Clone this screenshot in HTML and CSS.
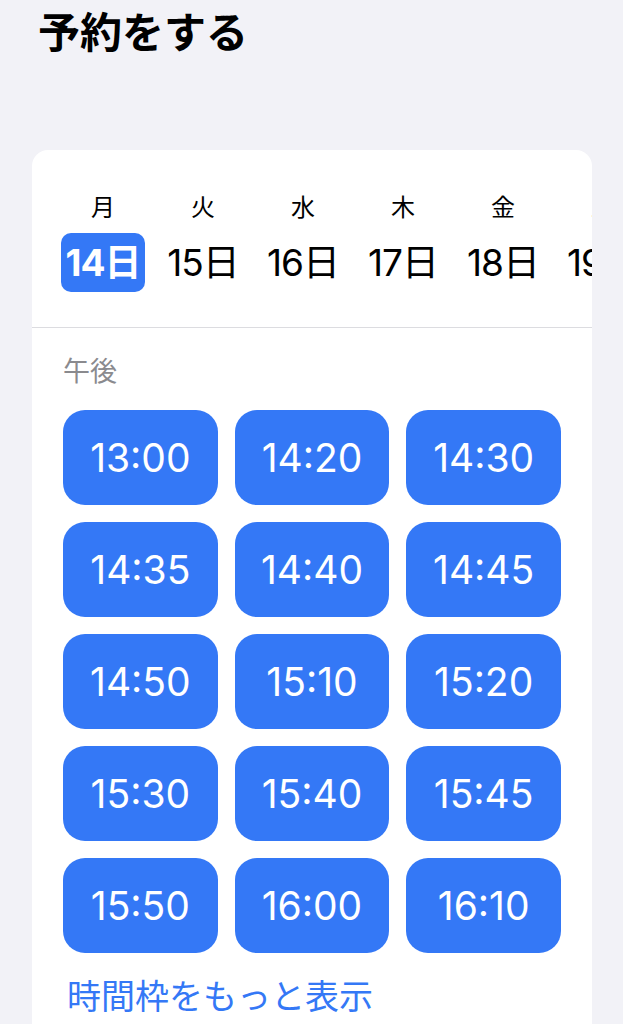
FILE: index.html
```html
<!DOCTYPE html>
<html lang="ja">
<head>
  <meta charset="UTF-8" />
  <meta name="viewport" content="width=device-width, initial-scale=1.0"/>
  <title>予約をする</title>
  <link rel="stylesheet" href="styles.css">
</head>
<body>
  <header>
    <h1>予約をする</h1>
  </header>

  <main>
    <section class="card">
      <div class="days">
        <div class="day">
          <span class="weekday">月</span>
          <span class="date selected">14日</span>
        </div>
        <div class="day">
          <span class="weekday">火</span>
          <span class="date">15日</span>
        </div>
        <div class="day">
          <span class="weekday">水</span>
          <span class="date">16日</span>
        </div>
        <div class="day">
          <span class="weekday">木</span>
          <span class="date">17日</span>
        </div>
        <div class="day">
          <span class="weekday">金</span>
          <span class="date">18日</span>
        </div>
        <div class="day">
          <span class="weekday">土</span>
          <span class="date">19日</span>
        </div>
      </div>

      <div class="slots">
        <h2>午後</h2>
        <div class="slot-grid">
          <button>13:00</button>
          <button>14:20</button>
          <button>14:30</button>
          <button>14:35</button>
          <button>14:40</button>
          <button>14:45</button>
          <button>14:50</button>
          <button>15:10</button>
          <button>15:20</button>
          <button>15:30</button>
          <button>15:40</button>
          <button>15:45</button>
          <button>15:50</button>
          <button>16:00</button>
          <button>16:10</button>
        </div>
        <a class="more" href="#">時間枠をもっと表示</a>
      </div>
    </section>
  </main>
</body>
</html>
```

FILE: styles.css
```css
body {
  font-family: Inter, "Noto Sans CJK JP", sans-serif;
  background-color: #f2f2f7;
  color: #000;
  margin: 0;
  padding: 0;
  height: 1024px;
  overflow: hidden;
}

header {
  padding: 4px 38px 0;
}

h1 {
  margin: 0;
  font-size: 42px;
  font-weight: 700;
  line-height: 58px;
}

main {
  padding: 88px 31px 0 32px;
}

.card {
  background-color: #fff;
  border-radius: 16px 16px 0 0;
  overflow: hidden;
  height: 900px;
}

.days {
  display: flex;
  padding: 40px 0 0 21px;
  height: 178px;
  box-sizing: border-box;
  border-bottom: 1px solid #dcdce0;
}

.day {
  flex: 0 0 100px;
  display: flex;
  flex-direction: column;
  align-items: center;
}

.weekday {
  font-size: 24px;
  line-height: 32px;
  font-family: "Noto Sans CJK JP", sans-serif;
}

.date {
  margin-top: 11px;
  font-size: 37px;
  line-height: 59px;
  padding: 0 5px;
  letter-spacing: -1px;
  border-radius: 10px;
}

.date.selected {
  background-color: #3478f6;
  color: #fff;
  font-weight: 700;
}

.slots {
  padding: 0 31px;
}

h2 {
  margin: 24px 0 0;
  font-size: 27px;
  font-weight: 400;
  line-height: 40px;
  color: #8a8a8e;
}

.slot-grid {
  display: grid;
  grid-template-columns: repeat(3, 1fr);
  gap: 17px;
  margin-top: 18px;
}

.slot-grid button {
  height: 95px;
  border: none;
  border-radius: 22px;
  background-color: #3478f6;
  color: #fff;
  font-family: Inter, sans-serif;
  font-size: 39px;
  font-weight: 400;
  padding: 0;
}

.more {
  display: block;
  margin-top: 22px;
  font-size: 34px;
  line-height: 44px;
  color: #3478f6;
  text-decoration: none;
  padding-left: 4px;
}
```
